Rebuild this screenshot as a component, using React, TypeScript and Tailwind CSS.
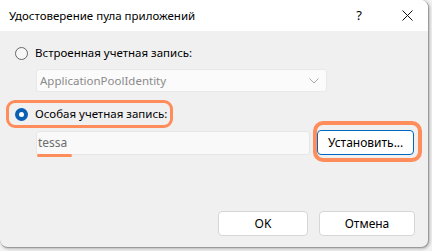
import React from "react";

export default function App() {
  const font = { fontFamily: '"Noto Sans", "Segoe UI", sans-serif' };
  return (
    <div className="w-[432px] h-[251px] bg-[#f2f2f2] overflow-hidden relative" style={font}>
      <div className="w-[429px] h-[248px] bg-[#f0f0f0] border-r border-b border-[#9a9a9a] rounded-tr-[8px] rounded-b-[8px] overflow-hidden flex flex-col shadow-[1px_1px_3px_rgba(0,0,0,0.25)]">
        {/* title bar */}
        <div className="h-[31px] bg-white flex items-center pl-[9px] shrink-0">
          <span className="text-[11.5px] text-black leading-none">Удостоверение пула приложений</span>
          <span className="ml-auto text-[13px] text-black leading-none mr-[40px]">?</span>
          <svg width="11" height="11" viewBox="0 0 11 11" className="mr-[15px]">
            <path d="M0.5 0.5 L10.5 10.5 M10.5 0.5 L0.5 10.5" stroke="#111" strokeWidth="1" />
          </svg>
        </div>
        {/* body */}
        <div className="flex-1 relative pl-[15px] pr-[14px] pt-[14px]">
          {/* radio 1 */}
          <div className="flex items-center h-[16px]">
            <div className="w-[13px] h-[13px] rounded-full border border-[#666] bg-[#f7f7f7]" />
            <span className="ml-[7px] text-[11.5px] text-black leading-none">Встроенная учетная запись:</span>
          </div>
          {/* combo */}
          <div className="ml-[21px] mt-[8px] w-[291px] h-[23px] bg-[#fbfbfb] border border-[#e8e8e8] rounded-[3px] flex items-center pl-[3px] pr-[7px]">
            <span className="text-[11.5px] text-[#8a8a8a] leading-none">ApplicationPoolIdentity</span>
            <svg width="10" height="6" viewBox="0 0 10 6" className="ml-auto">
              <path d="M0.5 0.5 L5 5 L9.5 0.5" stroke="#a8a8a8" fill="none" strokeWidth="1" />
            </svg>
          </div>
          {/* radio 2 */}
          <div className="flex items-center h-[16px] mt-[14px]">
            <div className="w-[13px] h-[13px] rounded-full bg-[#0a5fb4] flex items-center justify-center">
              <div className="w-[5px] h-[5px] rounded-full bg-white" />
            </div>
            <span className="ml-[7px] text-[11.5px] text-black leading-none">Особая учетная запись:</span>
          </div>
          {/* text + button */}
          <div className="flex items-center mt-[8px]">
            <div className="ml-[21px] w-[275px] h-[24px] bg-[#f9f9f9] border border-[#e6e6e6] rounded-[3px] flex items-center pl-[1px] relative">
              <span className="text-[12px] text-[#6d6d6d] leading-none">tessa</span>
              <div className="absolute left-0 bottom-[-3px] w-[35px] h-[3px] bg-[#ff8d5c] rounded-full" />
            </div>
            <div className="ml-[7px] w-[97px] h-[25px] bg-white border-[1.5px] border-[#0067c0] rounded-[4px] flex items-center justify-center">
              <span className="text-[12px] text-black leading-none">Установить...</span>
            </div>
          </div>
          {/* bottom buttons */}
          <div className="absolute left-0 right-0 bottom-[11px] flex justify-end pr-[13px] gap-[11px]">
            <div className="w-[90px] h-[25px] bg-white border border-[#d6d6d6] rounded-[4px] flex items-center justify-center">
              <span className="text-[12px] text-black leading-none">OK</span>
            </div>
            <div className="w-[96px] h-[25px] bg-white border border-[#d6d6d6] rounded-[4px] flex items-center justify-center">
              <span className="text-[12px] text-black leading-none">Отмена</span>
            </div>
          </div>
          {/* highlights */}
          <div className="absolute left-[6px] top-[69px] w-[167px] h-[28px] border-[3px] border-[#ff8d5c] rounded-[9px] pointer-events-none" />
          <div className="absolute left-[313px] top-[90px] w-[109px] h-[41px] border-[4px] border-[#ff8d5c] rounded-[10px] pointer-events-none" />
        </div>
      </div>
    </div>
  );
}
